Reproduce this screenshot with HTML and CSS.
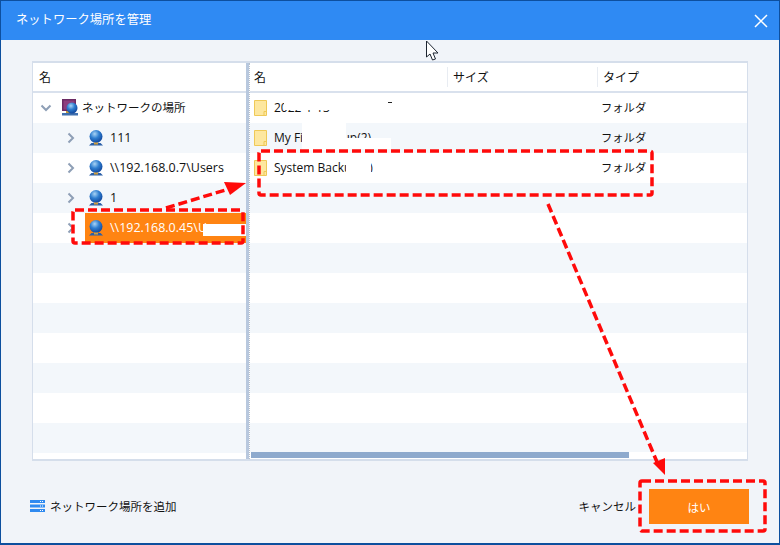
FILE: index.html
```html
<!DOCTYPE html>
<html lang="ja">
<head>
<meta charset="utf-8">
<title>ネットワーク場所を管理</title>
<link rel="stylesheet" href="styles.css">
</head>
<body>
<svg class="defs" width="0" height="0">
  <defs>
    <radialGradient id="g" cx="40%" cy="30%" r="75%">
      <stop offset="0" stop-color="#a9d4f5"/><stop offset=".45" stop-color="#2f7fd0"/><stop offset="1" stop-color="#0d3f96"/>
    </radialGradient>
    <symbol id="globe" viewBox="0 0 16 16">
      <circle cx="8" cy="6.5" r="6.500" fill="url(#g)"/>
      <path d="M3.500 13h9l2.500 2.500H1z" fill="#2a5fa8"/>
      <rect x="6" y="12.500" width="4" height="2" fill="#d09f3e"/>
    </symbol>
    <symbol id="folder" viewBox="0 0 13 16">
      <path d="M.5.5h12v15H.5z" fill="#fde79f" stroke="#efc957"/>
      <path d="M10 15.5v-4h2.5" fill="none" stroke="#efc957"/>
    </symbol>
    <symbol id="right" viewBox="0 0 8 12">
      <path d="M1.5 1.5 6 6l-4.500 4.500" fill="none" stroke="#8e9fb6" stroke-width="2"/>
    </symbol>
  </defs>
</svg>
<div class="window">
  <header class="titlebar">
    <span class="title">ネットワーク場所を管理</span>
    <svg class="close" width="14" height="14" viewBox="0 0 14 14"><path d="M1 1l12 12M13 1 1 13" stroke="#fff" stroke-width="1.500"/></svg>
  </header>
  <main class="body">
    <section class="table">
      <div class="tree">
        <div class="head"><span class="cell tree-name">名</span></div>
        <div class="row">
          <svg class="chev-down" width="12" height="8" viewBox="0 0 12 8"><path d="M1.500 1.500 6 6l4.500-4.500" fill="none" stroke="#8e9fb6" stroke-width="2"/></svg>
          <svg class="net" width="18" height="18" viewBox="0 0 18 18">
            <rect x="1" y="0" width="14" height="12" fill="#6b2a63"/>
            <rect x="2.500" y="1.500" width="11" height="9" fill="#8d3f7e"/>
            <rect x="1" y="14" width="16" height="2.500" fill="#3f6fae"/>
            <rect x="5" y="12" width="5" height="2" fill="#c99b3c"/>
            <circle cx="11" cy="9" r="5.500" fill="url(#g)"/>
          </svg>
          <span class="label jp">ネットワークの場所</span>
        </div>
        <div class="row alt child"><svg class="chev" width="8" height="12"><use href="#right"/></svg><svg class="globe" width="16" height="16"><use href="#globe"/></svg><span class="label">111</span></div>
        <div class="row child"><svg class="chev" width="8" height="12"><use href="#right"/></svg><svg class="globe" width="16" height="16"><use href="#globe"/></svg><span class="label">\\192.168.0.7\Users</span></div>
        <div class="row alt child"><svg class="chev" width="8" height="12"><use href="#right"/></svg><svg class="globe" width="16" height="16"><use href="#globe"/></svg><span class="label">1</span></div>
        <div class="row child"><svg class="chev" width="8" height="12"><use href="#right"/></svg><span class="selected"><svg class="globe" width="16" height="16"><use href="#globe"/></svg><span class="label">\\192.168.0.45\Users</span></span></div>
        <div class="row alt"></div><div class="row"></div><div class="row alt"></div><div class="row"></div>
        <div class="row alt"></div><div class="row"></div><div class="row alt"></div>
      </div>
      <div class="splitter"></div>
      <div class="list">
        <div class="head">
          <span class="cell col-name">名</span>
          <span class="cell col-size">サイズ</span>
          <span class="cell col-type">タイプ</span>
        </div>
        <div class="row"><svg class="folder" width="13" height="16"><use href="#folder"/></svg><span class="file">2022-1-13</span><span class="type">フォルダ</span></div>
        <div class="row alt"><svg class="folder" width="13" height="16"><use href="#folder"/></svg><span class="file">My File Backup(2)</span><span class="type">フォルダ</span></div>
        <div class="row"><svg class="folder" width="13" height="16"><use href="#folder"/></svg><span class="file">System Backup(2)</span><span class="type">フォルダ</span></div>
        <div class="row alt"></div><div class="row"></div><div class="row alt"></div><div class="row"></div>
        <div class="row alt"></div><div class="row"></div><div class="row alt"></div><div class="row"></div><div class="row alt"></div>
        <div class="scroll"><div class="thumb"></div></div>
      </div>
    </section>
    <footer class="footer">
      <div class="add">
        <svg width="15" height="13" viewBox="0 0 15 13"><path d="M0 0h15v3H0zM0 4.500h15v3H0zM0 9h15v3H0z" fill="#2f8af0"/><path d="M10 1h1v1h-1zM12 1h1v1h-1zM10 5.500h1v1h-1zM12 5.500h1v1h-1zM10 10h1v1h-1zM12 10h1v1h-1z" fill="#fff"/></svg>
        <span>ネットワーク場所を追加</span>
      </div>
      <div class="actions">
        <span class="cancel">キャンセル</span>
        <button class="ok">はい</button>
      </div>
    </footer>
  </main>
  <div class="patch p1"></div>
  <div class="patch p2"></div>
  <div class="patch p3"></div>
  <div class="patch p4"></div>
  <div class="patch p5"></div>
  <div class="patch p6"></div>
  <div class="patch p7"></div>
  <div class="speck"></div>
  <svg class="overlay" width="780" height="545" viewBox="0 0 780 545">
    <g fill="none" stroke="#ff0a0a" stroke-width="3.500" stroke-dasharray="9 4">
      <rect x="73" y="210" width="170" height="33" rx="2"/>
      <rect x="259" y="151" width="393" height="44" rx="2"/>
      <rect x="640" y="481" width="125" height="50" rx="2"/>
      <path d="M166 208 232 188"/>
      <path d="M548 204 657 462"/>
    </g>
    <path d="M246 183 224 182 230 195z" fill="#ff0a0a"/>
    <path d="M665 475 653 463 665 458z" fill="#ff0a0a"/>
    <path d="M426.500 41v16l3.500-3 2.500 6 3-1-2.500-6h5z" fill="#fff" stroke="#1c2430" stroke-width="1"/>
  </svg>
</div>
</body>
</html>
```
FILE: styles.css
```css
* { box-sizing: border-box; }
html, body { margin: 0; height: 100%; }
body {
  width: 780px;
  height: 545px;
  overflow: hidden;
  font-family: "Open Sans", "Noto Sans CJK JP", sans-serif;
  font-size: 11.500px;
  color: #111;
}
.defs { position: absolute; }
.window {
  position: relative;
  width: 780px;
  height: 545px;
  display: flex;
  flex-direction: column;
  background: #f1f4f9;
  border: 1px solid #0d4f9e;
  border-bottom-width: 2px;
}
.titlebar {
  flex: 0 0 39px;
  display: flex;
  align-items: center;
  justify-content: space-between;
  padding: 0 11px 0 15px;
  background: #2f8af3;
  color: #fff;
}
.title { font-size: 12.300px; margin-top: -3px; }
.body {
  flex: 1;
  display: flex;
  flex-direction: column;
  padding: 21px 31px 0;
}
.table {
  display: flex;
  width: 716px;
  height: 400px;
  background: #fff;
  border: 1px solid #d5deeb;
  border-width: 2px 1px;
}
.tree { width: 213px; }
.splitter { width: 3px; background: #b8c8de; }
.list { flex: 1; position: relative; border-left: 1px dotted #b8c0cc; }
.head {
  height: 30px;
  display: flex;
  align-items: center;
  border-bottom: 2px solid #d9e1ed;
}
.cell { display: flex; align-items: center; height: 20px; font-size: 12px; }
.tree-name { padding-left: 6px; }
.col-name { width: 197px; padding-left: 4px; }
.col-size { width: 150px; padding-left: 5px; border-left: 1px solid #e8ecf2; }
.col-type { padding-left: 5px; border-left: 1px solid #e8ecf2; }
.row {
  height: 30px;
  display: flex;
  align-items: center;
  background: #fff;
}
.row.alt { background: #f3f7fb; }
.tree .row { padding-left: 6px; }
.chev-down { margin-right: 9px; margin-left: 1px; }
.net { margin-right: 3px; }
.child { padding-left: 34px !important; }
.chev { margin-right: 13px; flex: none; }
.globe { flex: none; margin-right: 6px; margin-left: 0; }
.selected {
  flex: 1;
  align-self: stretch;
  margin-left: -3px;
  padding-left: 3px;
  display: flex;
  align-items: center;
  background: #ff8412;
  color: #fff;
  overflow: hidden;
  white-space: nowrap;
}
.label { white-space: nowrap; font-size: 12.500px; margin-top: -2px; }
.label.jp { font-size: 11.500px; }
.list .row { padding-left: 4px; }
.folder { flex: none; margin-right: 7px; }
.file { width: 327px; white-space: nowrap; font-size: 12px; margin-top: -2px; }
.type { font-size: 11.300px; margin-top: -2px; }
.scroll {
  position: absolute;
  left: 0;
  right: 0;
  bottom: 0;
  height: 7px;
  background: #fff;
}
.thumb { width: 378px; height: 6px; margin-left: 1px; background: #8eaacd; }
.footer {
  flex: 1;
  display: flex;
  align-items: center;
  justify-content: space-between;
  padding: 9px 0 0;
}
.add { display: flex; align-items: center; gap: 5px; margin-left: -2px; }
.add span { margin-top: -2px; }
.actions { display: flex; align-items: center; gap: 13px; margin-right: -1px; margin-left: auto; }
.cancel { margin-top: -2px; }
.ok {
  width: 100px;
  height: 35px;
  border: 0;
  background: #ff8412;
  color: #fff;
  font: inherit;
}
.patch { position: absolute; background: #fff; }
.p1 { left: 202px; top: 223px; width: 43px; height: 12px; }
.p2 { left: 283px; top: 98px; width: 90px; height: 11px; }
.p3 { left: 301px; top: 121px; width: 44px; height: 28px; }
.p4 { left: 345px; top: 137px; width: 45px; height: 11px; }
.p5 { left: 338px; top: 106px; width: 50px; height: 10px; }
.p6 { left: 345px; top: 160px; width: 25px; height: 14px; }
.p7 { left: 283px; top: 171px; width: 100px; height: 5px; }
.speck { position: absolute; left: 387px; top: 101px; width: 4px; height: 1px; background: #222; }
.overlay { position: absolute; left: -1px; top: -1px; pointer-events: none; }
```
